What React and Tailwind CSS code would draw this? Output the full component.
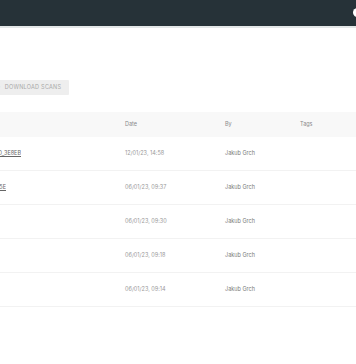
import React from 'react';

const rows = [
    { name: 'scan_2023_01_12_0_3E8EB', nameEnd: 21, date: '12/01/23, 14:58', by: 'Jakub Grch' },
    { name: 'scan_2023_01_06_5E', nameEnd: 6, date: '06/01/23, 09:37', by: 'Jakub Grch' },
    { name: '', nameEnd: 0, date: '06/01/23, 09:30', by: 'Jakub Grch' },
    { name: '', nameEnd: 0, date: '06/01/23, 09:18', by: 'Jakub Grch' },
    { name: '', nameEnd: 0, date: '06/01/23, 09:14', by: 'Jakub Grch' },
];

const App = () => {
    return (
        <div className="w-[356px] h-[364px] overflow-hidden bg-white font-['Inter','Liberation_Sans',sans-serif]">
            {/* top bar */}
            <div className="relative h-[26px] bg-[#263238] border-b-2 border-[#e3e7e7] box-content">
                <div className="absolute right-[-6px] top-[8px] w-[9px] h-[9px] rounded-full bg-white" />
            </div>

            {/* toolbar */}
            <div className="mt-[52px] flex">
                <button className="-ml-[6px] h-[15px] pl-[2px] pr-[8px] flex items-center gap-[4px] bg-[#eeeeee] rounded-[1px] text-[5.5px] tracking-[0.25px] uppercase text-[#a8a8a8]">
                    <span>↓</span>
                    <span>Download scans</span>
                </button>
            </div>

            {/* table */}
            <div className="mt-[17px]">
                <div className="grid grid-cols-[125px_100px_75px_56px] h-[25px] items-center bg-[#f8f8f8] text-[5.5px] text-[#8a8a8a]">
                    <div />
                    <div>Date</div>
                    <div>By</div>
                    <div>Tags</div>
                </div>
                {rows.map((row, i) => (
                    <div
                        key={i}
                        className="grid grid-cols-[125px_100px_75px_56px] h-[34px] items-center border-b border-[#f2f2f2] text-[5.5px]"
                    >
                        <div className="flex">
                            {row.name && (
                                <div className="flex justify-end overflow-hidden" style={{ width: row.nameEnd }}>
                                    <span className="whitespace-nowrap text-[#666] underline">{row.name}</span>
                                </div>
                            )}
                        </div>
                        <div className="text-[#999999]">{row.date}</div>
                        <div className="text-[#7a7a7a]">{row.by}</div>
                        <div />
                    </div>
                ))}
            </div>
        </div>
    );
};

export default App;
